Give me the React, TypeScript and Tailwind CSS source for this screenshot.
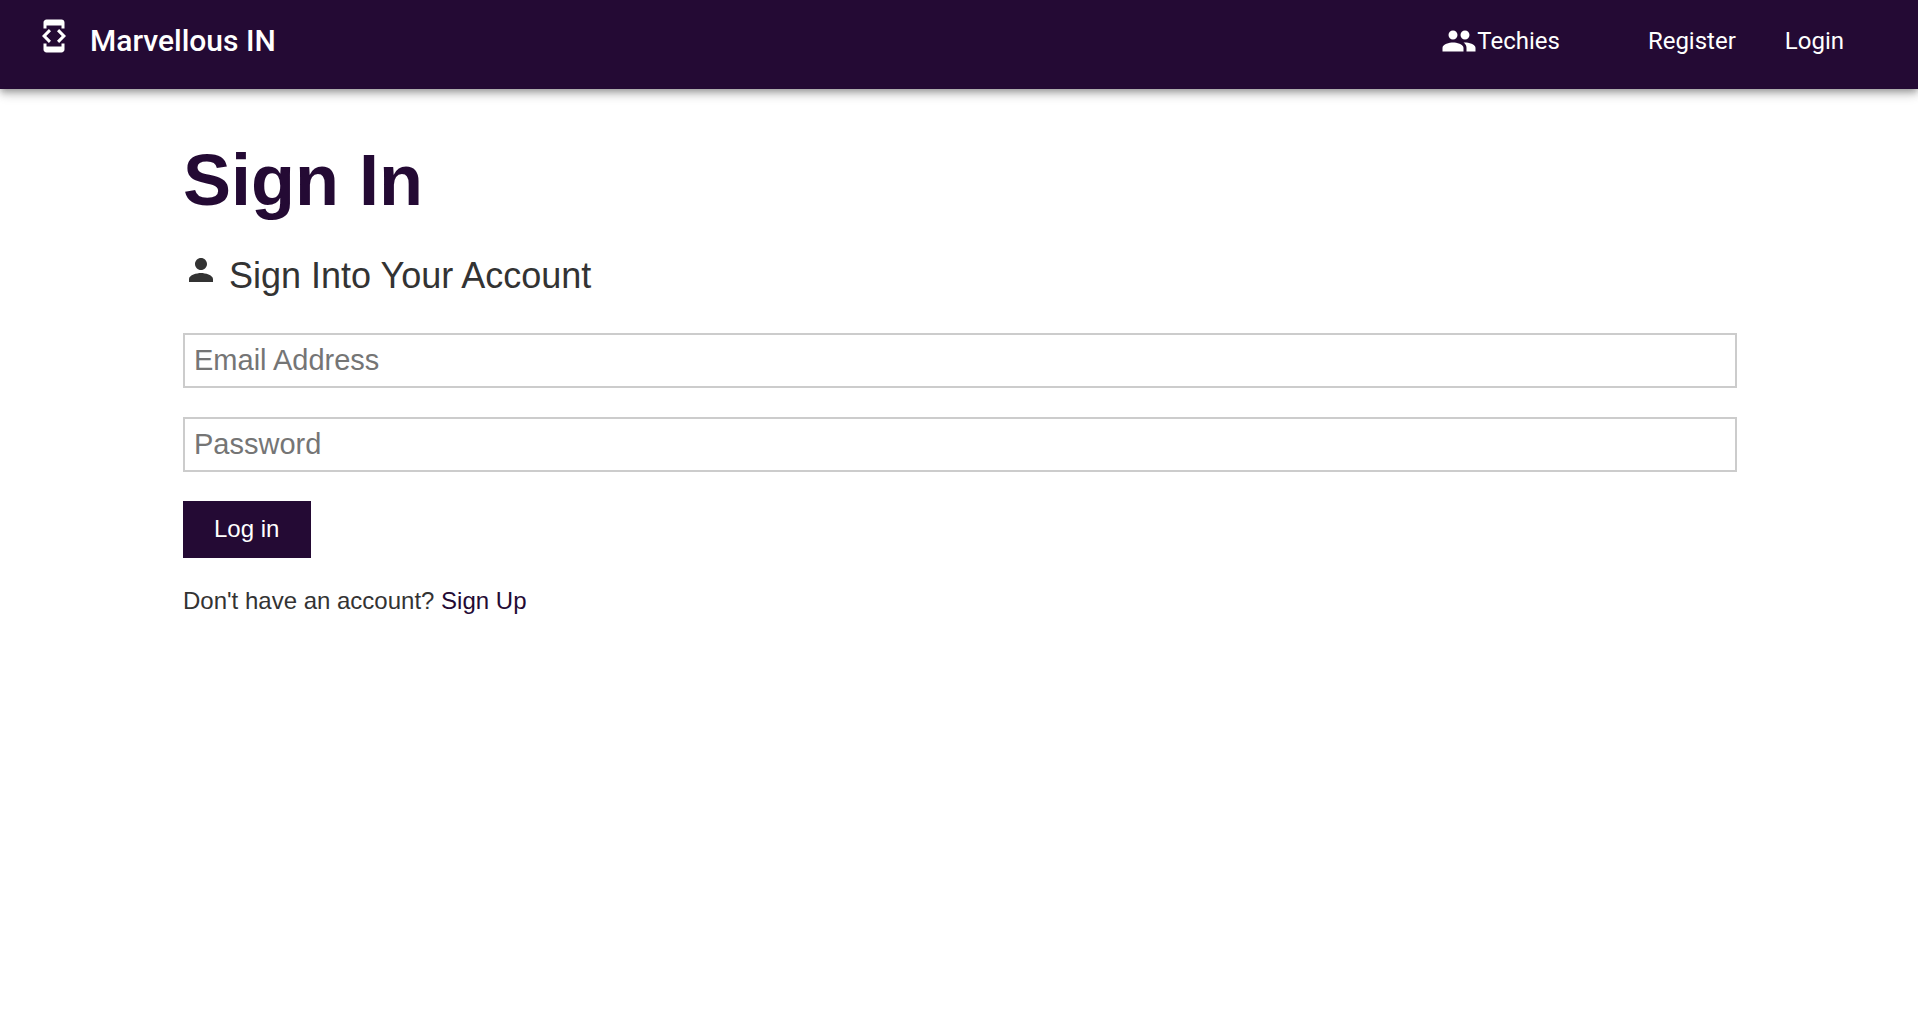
import { MdDeveloperMode, MdPeople, MdPerson } from "react-icons/md";

export default function App() {
  return (
    <div className="min-h-screen bg-white font-['Liberation_Sans',Arial,sans-serif] text-[#333333]">
      <header className="flex h-[89px] items-start justify-between bg-[#240a34] px-9 text-white shadow-[0_3px_6px_-1px_rgba(0,0,0,0.25),0_6px_8px_0_rgba(0,0,0,0.14),0_2px_15px_0_rgba(0,0,0,0.12)] font-['Roboto',sans-serif]">
        <a href="#" className="flex items-start gap-[18px] pt-[18px]">
          <MdDeveloperMode className="size-9" />
          <span className="pt-[3px] text-[30px] leading-[40px] font-medium">Marvellous IN</span>
        </a>
        <nav className="flex pr-[38px] pt-[21px] text-2xl leading-[40px]">
          <a href="#" className="mr-[88px] flex items-center">
            <MdPeople className="size-9" />
            Techies
          </a>
          <a href="#" className="mr-[49px]">Register</a>
          <a href="#">Login</a>
        </nav>
      </header>
      <main className="pt-12 pr-[181px] pl-[183px]">
        <h1 className="text-[72px] leading-[86px] font-bold text-[#240a34]">Sign In</h1>
        <p className="mt-6 flex items-start gap-[10px] text-4xl leading-[58px]">
          <MdPerson className="mt-[5px] size-9" />
          Sign Into Your Account
        </p>
        <form className="mt-7">
          <input type="email" aria-label="Email Address" placeholder="Email Address" className="block h-[55px] w-full border-2 border-[#cccccc] px-[9px] text-[29px] placeholder:text-[#757575]" />
          <input type="password" aria-label="Password" placeholder="Password" className="mt-[29px] block h-[55px] w-full border-2 border-[#cccccc] px-[9px] text-[29px] placeholder:text-[#757575]" />
          <button type="submit" className="mt-[29px] h-[57px] bg-[#240a34] pr-8 pb-[2px] pl-[31px] text-2xl text-white">Log in</button>
        </form>
        <p className="mt-6 text-2xl leading-[38px]">
          Don't have an account? <a href="#" className="text-[#240a34]">Sign Up</a>
        </p>
      </main>
    </div>
  );
}
